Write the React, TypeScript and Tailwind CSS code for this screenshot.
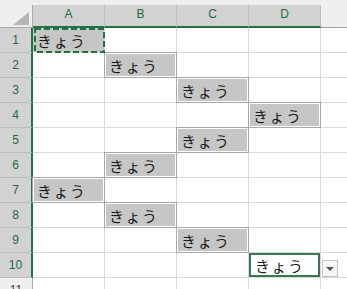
import React from "react";

const COLS = ["A", "B", "C", "D"];
// row number -> column index holding a filled cell
const FILLED: Record<number, number> = { 2: 1, 3: 2, 4: 3, 5: 2, 6: 1, 7: 0, 8: 1, 9: 2 };
const JP = { fontFamily: '"Noto Sans CJK JP", "Noto Sans", sans-serif' };

function FilledCell() {
  return (
    <div className="relative z-10 flex h-full w-full items-center border border-white bg-[#c6c6c6] pl-[3px] text-[15px] leading-none tracking-[1.5px] text-[#1a1a1a] outline outline-1 outline-[#a8a8a8]" style={JP}>
      きょう
    </div>
  );
}

function CopyCell() {
  return (
    <div className="relative h-full w-full">
      <div className="flex h-full w-full items-center bg-[#c6c6c6] pl-[4px] text-[15px] leading-none tracking-[1.5px] text-[#1a1a1a]" style={JP}>
        きょう
      </div>
      <svg className="absolute left-0 top-0 z-20" width="72" height="25" viewBox="0 0 72 25">
        <rect x="2" y="1" width="69" height="23" fill="none" stroke="#217346" strokeWidth="2" strokeDasharray="6 3" />
      </svg>
    </div>
  );
}

function EditCell() {
  return (
    <div className="flex h-full w-full items-center border-2 border-[#3a7656] bg-white pl-[4px] text-[15px] leading-none tracking-[1.5px] text-[#1a1a1a]" style={JP}>
      きょう
    </div>
  );
}

export default function App() {
  const rows = Array.from({ length: 11 }, (_, i) => i + 1);
  return (
    <div className="h-[289px] w-[347px] overflow-hidden bg-white" style={{ fontFamily: '"Liberation Sans", Arial, sans-serif' }}>
      <div className="h-[5px] bg-[#efefef]" />
      <div className="grid grid-cols-[33px_72px_72px_72px_72px_26px] grid-rows-[23px_repeat(11,25px)]">
        {/* corner */}
        <div className="relative border-b border-r border-[#ababab] bg-[#efefef]">
          <svg className="absolute bottom-[2px] right-[3px]" width="16" height="13" viewBox="0 0 16 13">
            <polygon points="16,0 16,13 0,13" fill="#b5b5b5" />
          </svg>
        </div>
        {COLS.map((c) => (
          <div key={c} className="flex items-center justify-center border-b-2 border-r border-b-[#217346] border-r-[#bdbdbd] bg-[#d2d2d2] pb-[3px] text-[12px] text-[#1e6b43]">
            {c}
          </div>
        ))}
        <div className="border-b border-[#a0a0a0] bg-[#efefef]" />

        {rows.map((r) => {
          const selected = r <= 10;
          return (
            <React.Fragment key={r}>
              <div
                className={
                  selected
                    ? "flex items-center justify-center border-b border-r-2 border-b-[#bdbdbd] border-r-[#217346] bg-[#d2d2d2] text-[12px] text-[#1e6b43]"
                    : "flex items-center justify-center border-b border-r border-b-[#bdbdbd] border-r-[#ababab] bg-[#efefef] text-[12px] text-[#444]"
                }
              >
                {r}
              </div>
              {COLS.map((c, ci) => (
                <div key={c} className="border-b border-r border-[#dadada]">
                  {r === 1 && ci === 0 ? <CopyCell /> : null}
                  {FILLED[r] === ci ? <FilledCell /> : null}
                  {r === 10 && ci === 3 ? <EditCell /> : null}
                </div>
              ))}
              <div className="border-b border-[#dadada]">
                {r === 10 ? (
                  <div className="ml-[1px] mt-[7px] flex h-[17px] w-[16px] items-center justify-center border border-[#c4c4c4] bg-[#f7f7f7]">
                    <svg width="8" height="4" viewBox="0 0 8 4">
                      <polygon points="0,0 8,0 4,4" fill="#555" />
                    </svg>
                  </div>
                ) : null}
              </div>
            </React.Fragment>
          );
        })}
      </div>
    </div>
  );
}
